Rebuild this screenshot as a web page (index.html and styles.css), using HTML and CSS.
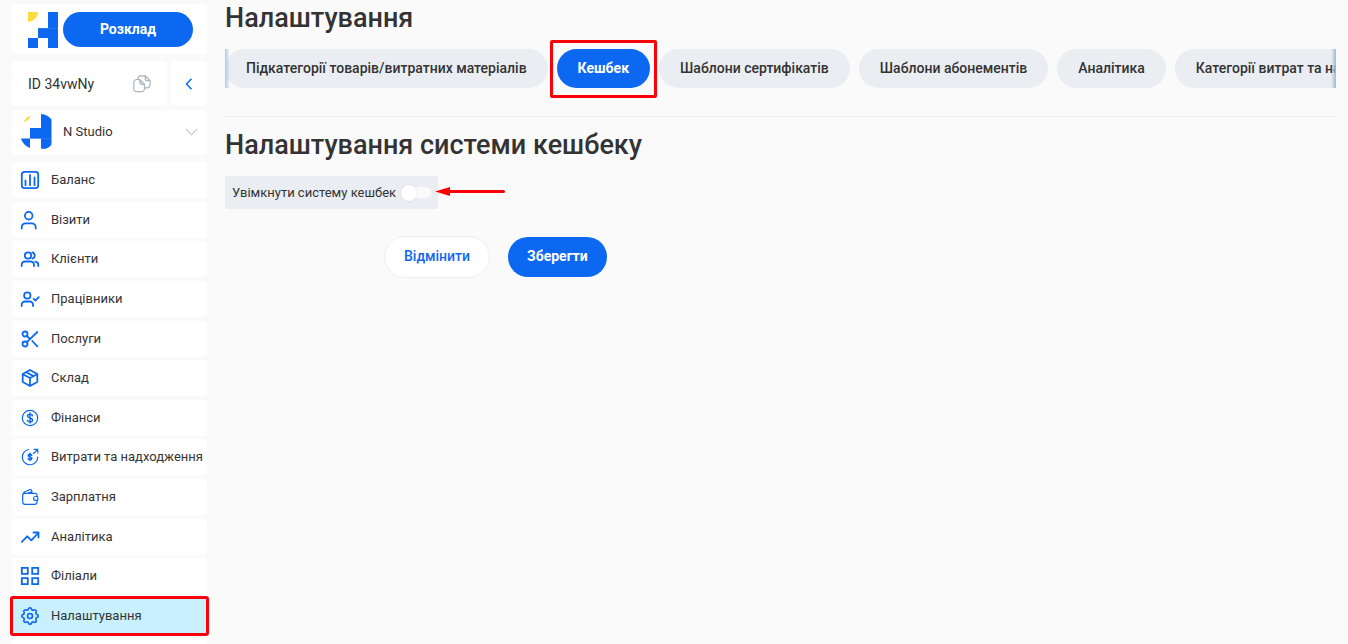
FILE: index.html
```html
<!DOCTYPE html>
<html lang="uk">
<head>
<meta charset="utf-8">
<title>Налаштування</title>
<link rel="stylesheet" href="styles.css">
</head>
<body>
<div class="app">
  <aside class="sidebar">
    <div class="card brand">
      <svg class="brand-logo" viewBox="0 0 30 36" aria-hidden="true"><path fill="#fddc3f" d="M0 0h10a10 10 0 0 1-10 10z"/><path fill="#0d68f1" d="M20 0h10v36H20V26H10V16h10zM0 26h10v10H0z"/><path stroke="#3d85f4" stroke-width=".6" d="M10 16.500h20"/></svg>
      <button class="btn btn-primary schedule" type="button">Розклад</button>
    </div>
    <div class="id-row">
      <div class="card id-card">
        <span>ID 34vwNy</span>
        <button class="icon-btn" type="button" aria-label="Копіювати">
          <svg width="18" height="18" viewBox="0 0 18 18" fill="none" stroke="#a9b4bf" stroke-width="1.200" stroke-linejoin="round" stroke-linecap="round"><path d="M6 4.500H4A3.200 3.200 0 0 0 .8 7.700v5.800A3.200 3.200 0 0 0 4 16.700h4.300a3.200 3.200 0 0 0 3.200-3.200V9.300zM6.700 4.500v2.300c0 1.500.8 2.500 2.300 2.500h2.500M6.700 4.500l4.800 4.800"/><path d="M4.700 4.200C4.700 2 6.300.8 7.900.8h4.200l5 4.900v3.500c0 2.200-1.300 3.600-3.200 3.600h-2M12.100.8v2.400c0 1.600.9 2.500 2.500 2.500h2.500"/></svg>
        </button>
      </div>
      <button class="card collapse" type="button" aria-label="Згорнути меню">
        <svg width="8" height="12" viewBox="0 0 8 12" fill="none" stroke="#0d68f1" stroke-width="1.500"><path d="M6.500.7 1.500 6l5 5.300"/></svg>
      </button>
    </div>
    <button class="card studio" type="button">
      <svg width="32" height="36" viewBox="0 0 32 36" aria-hidden="true"><path fill="#fddc3f" d="M2.500 8C4 5 6.600 2.600 9.600 2 8.600 5 5.500 7.700 2.500 8z"/><path fill="#0d68f1" d="M20 0c4.500.3 8.500 2.500 10.500 5.500v25c-1.500 2.500-4.500 4-7.500 4.500l-3-.5V24.500H9V14h11zM0 24.500h9V34C5 32.500 1.300 29 0 24.500z"/><path stroke="#3d85f4" stroke-width=".6" d="M9 24.500h21.500"/></svg>
      <span class="studio-name">N Studio</span>
      <svg width="13" height="8" viewBox="0 0 13 8" fill="none" stroke="#c3cad6" stroke-width="1.200"><path d="m.8.8 5.700 6 5.700-6"/></svg>
    </button>
    <nav class="menu">
      <a class="card menu-item" href="#"><svg class="ico" viewBox="0 0 20 20"><rect x="1.800" y="1.900" width="16.400" height="16.200" rx="2.500"/><path d="M5.500 10.500v4.700M10 5v10.200M14.500 7.500v7.700"/></svg>Баланс</a>
      <a class="card menu-item" href="#"><svg class="ico" viewBox="0 0 20 20"><circle cx="8.700" cy="5.700" r="3.800"/><path d="M1.700 18.500v-1.200a4 4 0 0 1 4-4h6a4 4 0 0 1 4 4v1.200"/></svg>Візити</a>
      <a class="card menu-item" href="#"><svg class="ico" viewBox="0 0 20 20"><circle cx="8" cy="6.500" r="3.200"/><path d="M1.700 17v-1.200a3.300 3.300 0 0 1 3.300-3.300h5.700a3.300 3.300 0 0 1 3.300 3.300V17M12.300 3.400a3.200 3.200 0 0 1 0 6.200M15.300 12.700a3.300 3.300 0 0 1 3 3.300v1"/></svg>Клієнти</a>
      <a class="card menu-item" href="#"><svg class="ico" viewBox="0 0 20 20"><circle cx="7.300" cy="6.500" r="3.200"/><path d="M1.700 17v-1.200A3.300 3.300 0 0 1 5 12.500h4.700a3.300 3.300 0 0 1 3.300 3.300V17M13.700 9.900l1.700 1.700 3.400-3.400"/></svg>Працівники</a>
      <a class="card menu-item" href="#"><svg class="ico" viewBox="0 0 20 20"><circle cx="5" cy="5" r="2.500"/><circle cx="5" cy="15" r="2.500"/><path d="M17.300 3 6.800 13.200M12.300 12l5 5.300M6.800 6.800 10 10"/></svg>Послуги</a>
      <a class="card menu-item" href="#"><svg class="ico" viewBox="0 0 20 20"><path d="m10 2 7.300 4v8L10 18l-7.300-4V6zM2.900 6.200 10 10l7.100-3.800M10 10v8M6.300 4.200l7.200 3.900"/></svg>Склад</a>
      <a class="card menu-item" href="#"><svg class="ico ico-thin" viewBox="0 0 20 20"><circle cx="10" cy="10" r="7.700"/><path stroke-width="1.400" d="M12.500 7.700C12.200 6.700 11.200 6.200 10 6.200c-1.500 0-2.500.7-2.500 1.800C7.500 10.500 12.600 9.500 12.600 12c0 1.100-1.100 1.900-2.600 1.900-1.300 0-2.400-.7-2.600-1.700M10 5v10"/></svg>Фінанси</a>
      <a class="card menu-item" href="#"><svg class="ico ico-thin" viewBox="0 0 20 20"><path d="M8.500 2.500A7.700 7.700 0 1 0 17.700 10M13.500 6.500l4.200-4.200M14 2.300h3.700V6"/><path stroke-width="1.500" d="M11.800 8.300c-.2-.7-.9-1.100-1.800-1.100-1.100 0-1.800.5-1.800 1.300 0 1.800 3.700 1.100 3.700 2.900 0 .8-.8 1.300-1.900 1.300-1 0-1.800-.5-1.900-1.200M10 6.300v7.300"/></svg>Витрати та надходження</a>
      <a class="card menu-item" href="#"><svg class="ico ico-thin" viewBox="0 0 20 20"><path d="M17 9V8.300c0-1.300-.8-2-2-2H4.700c-1.300 0-2 .8-2 2V15c0 1.500 1 2.400 2.400 2.400h9.500c1.500 0 2.400-.9 2.400-2.400v-.8M2.700 8.500C2.700 6.500 3.500 5.300 5 4.700l4.700-2c1.500-.5 2.100.2 2.100 1.500v2.100M9 5.300h3"/><path d="M17.700 9.500v3.900h-2c-1.300 0-2.100-.9-2.100-1.900s.8-2 2.100-2z"/></svg>Зарплатня</a>
      <a class="card menu-item" href="#"><svg class="ico" viewBox="0 0 20 20"><path d="m1.800 14.800 5.500-5.500 4 4L18.300 6M13.500 5.500h5v5"/></svg>Аналітика</a>
      <a class="card menu-item" href="#"><svg class="ico ico-square" viewBox="0 0 20 20"><path d="M1.800 1.800h6v6h-6zM12.200 1.800h6v6h-6zM1.800 12.200h6v6h-6zM12.200 12.200h6v6h-6z"/></svg>Філіали</a>
      <a class="card menu-item menu-item-active" href="#" aria-current="page"><svg class="ico" viewBox="1 1 22 22"><path d="M10.300 4.300c.4-1.800 3-1.800 3.400 0a1.700 1.700 0 0 0 2.600 1.100c1.500-.9 3.300.8 2.400 2.400a1.700 1.700 0 0 0 1 2.500c1.800.4 1.800 3 0 3.400a1.700 1.700 0 0 0-1 2.600c.9 1.500-.8 3.300-2.400 2.400a1.700 1.700 0 0 0-2.600 1c-.4 1.800-3 1.800-3.400 0a1.700 1.700 0 0 0-2.500-1c-1.600.9-3.300-.9-2.400-2.400a1.700 1.700 0 0 0-1.100-2.600c-1.800-.4-1.800-3 0-3.400a1.700 1.700 0 0 0 1.100-2.500c-.9-1.600.8-3.300 2.400-2.400 1 .6 2.300.1 2.500-1.100z"/><circle cx="12" cy="12" r="2.700"/></svg>Налаштування</a>
    </nav>
    <div class="card sidebar-end"></div>
  </aside>

  <main class="content">
    <h1 class="title">Налаштування</h1>
    <div class="tabs">
      <button class="tab" type="button">Підкатегорії товарів/витратних матеріалів</button>
      <button class="tab tab-active" type="button">Кешбек</button>
      <button class="tab" type="button">Шаблони сертифікатів</button>
      <button class="tab" type="button">Шаблони абонементів</button>
      <button class="tab" type="button">Аналітика</button>
      <button class="tab" type="button">Категорії витрат та надходжень</button>
    </div>
    <h2 class="title">Налаштування системи кешбеку</h2>
    <form class="cashback">
      <div class="switch-wrap">
        <label class="switch-row" for="cashback">Увімкнути систему кешбек
          <input class="switch" id="cashback" type="checkbox" role="switch">
        </label>
        <svg class="arrow" width="70" height="10" viewBox="0 0 70 10" aria-hidden="true"><path d="M14 5.500h54.500" stroke="#fb0007" stroke-width="3" stroke-linecap="round"/><path d="M0 5.500 15 1v9z" fill="#fb0007"/></svg>
      </div>
      <div class="actions">
        <button class="btn btn-plain" type="button">Відмінити</button>
        <button class="btn btn-primary" type="button">Зберегти</button>
      </div>
    </form>
  </main>
</div>
</body>
</html>
```
FILE: styles.css
```css
* {
  box-sizing: border-box;
}

body {
  margin: 0;
  background: #fafafa;
  color: #333;
  font: 400 13px/20px Roboto, "Noto Sans", sans-serif;
}

button {
  margin: 0;
  border: 0;
  color: inherit;
  font: inherit;
  cursor: pointer;
}

.app {
  display: flex;
  gap: 18px;
  height: 100vh;
  padding: 4px 12px 0;
  overflow: hidden;
}

.card {
  border-radius: 4px;
  background: #fff;
}

.sidebar {
  flex: 0 0 195px;
  min-width: 0;
}

.brand {
  display: flex;
  align-items: flex-start;
  gap: 5px;
  padding: 8px 14px 6px 16px;
}

.brand-logo {
  flex: none;
  width: 30px;
  height: 36px;
}

.btn {
  padding-bottom: 2px;
  border-radius: 20px;
  font-size: 14px;
  font-weight: 500;
}

.btn-primary {
  background: #0d68f1;
  color: #fff;
  font-weight: 700;
}

.schedule {
  flex: 1;
  height: 35px;
}

.id-row {
  display: flex;
  gap: 4px;
  margin-top: 7px;
}

.id-card {
  display: flex;
  flex: 1;
  align-items: center;
  justify-content: space-between;
  height: 45px;
  padding: 0 16px;
  font-size: 14px;
}

.icon-btn {
  display: flex;
  padding: 0;
  background: none;
}

.collapse {
  display: grid;
  place-items: center;
  width: 36px;
  padding: 0;
}

.studio {
  display: flex;
  align-items: center;
  width: 100%;
  height: 45px;
  margin-top: 4px;
  padding: 0 9px 2px;
  text-align: left;
}

.studio-name {
  flex: 1;
  padding-left: 10px;
}

.menu {
  display: flex;
  flex-direction: column;
  justify-content: space-between;
  min-height: 472px;
  margin-top: 7px;
}

.menu-item {
  display: flex;
  align-items: center;
  gap: 11px;
  height: 36px;
  padding-left: 8px;
  color: inherit;
  text-decoration: none;
  white-space: nowrap;
}

.menu-item-active {
  outline: 3px solid #fb0007;
  outline-offset: -1px;
  border-radius: 1px;
  background: #c8f0ff;
}

.ico {
  flex: none;
  width: 20px;
  height: 20px;
  fill: none;
  stroke: #0d68f1;
  stroke-width: 1.8;
  stroke-linecap: round;
  stroke-linejoin: round;
}

.ico-thin {
  stroke-width: 1.2;
}

.ico-square {
  stroke-linejoin: miter;
}

.sidebar-end {
  height: 36px;
  margin-top: 3px;
}

.content {
  flex: 1;
  min-width: 0;
}

.title {
  margin: 0;
  font-size: 27px;
  font-weight: 500;
  line-height: 28px;
}

.tabs {
  position: relative;
  display: flex;
  gap: 9px;
  margin: 17px 0 28px;
  overflow-x: clip;
}

.tabs::before,
.tabs::after {
  content: "";
  position: absolute;
  z-index: 1;
  top: 0;
  bottom: 0;
  left: 0;
  width: 5px;
  background: linear-gradient(to right, #b0c8df, #b0c8df00);
}

.tabs::after {
  right: 0;
  left: auto;
  background: linear-gradient(to left, #9dbad5, #9dbad500);
}

.tab {
  position: relative;
  flex: none;
  height: 39px;
  padding: 0 21px 2px;
  border-radius: 20px;
  background: #eaeef3;
  font-size: 14px;
  font-weight: 500;
}

.tab-active {
  background: #0d68f1;
  color: #fff;
  font-weight: 700;
}

.tab-active::after {
  content: "";
  position: absolute;
  inset: -9px -7px -10px;
  border: 3px solid #fb0007;
  border-radius: 2px;
}

.tabs + .title {
  padding-top: 14px;
  border-top: 1px solid #eee;
}

.switch-wrap {
  position: relative;
  width: fit-content;
  margin-top: 17px;
}

.switch-row {
  display: flex;
  align-items: center;
  gap: 5px;
  height: 33px;
  padding: 0 7px;
  border-radius: 3px;
  background: #eaeef3;
}

.switch {
  appearance: none;
  display: flex;
  align-items: center;
  width: 30px;
  height: 11px;
  margin: 0;
  border-radius: 6px;
  background: #fafafa;
}

.switch::before {
  content: "";
  width: 16px;
  height: 16px;
  border-radius: 50%;
  background: #fff;
  box-shadow: 0 0 2px #0002;
}

.arrow {
  position: absolute;
  top: 10px;
  left: calc(100% - 3px);
}

.actions {
  display: flex;
  align-items: center;
  gap: 18px;
  margin: 27px 0 0 159px;
}

.actions .btn {
  height: 40px;
  padding: 0 19px 2px;
}

.actions .btn-plain {
  height: 42px;
  border: 1px solid #eee;
  border-radius: 21px;
  background: #fff;
  color: #0d68f1;
}
```
